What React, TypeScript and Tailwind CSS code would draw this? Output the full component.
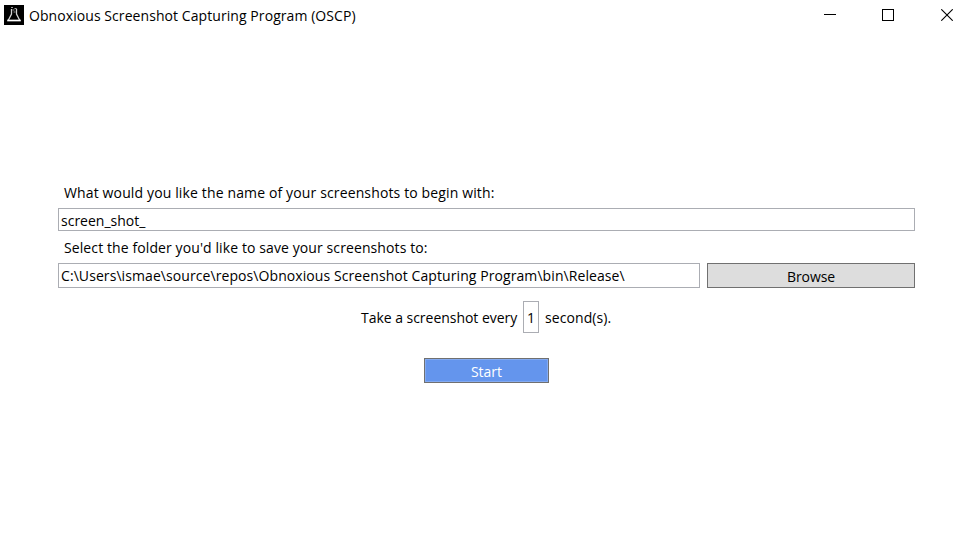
import React from "react";

function FlaskIcon() {
  return (
    <svg width="20" height="20" viewBox="0 0 20 20" className="shrink-0">
      <rect width="20" height="20" fill="#000" />
      <path d="M7.5 4v5L4.3 15.3M12.5 4v5l3.2 6.3" fill="none" stroke="#d2d2d2" strokeWidth="1.3" />
      <path d="M7 2.5h2M10.5 3.5h2.2M8.5 5h2M9.5 7h2" fill="none" stroke="#a0a0a0" strokeWidth="1.2" />
      <path d="M3.2 15.5h13.6" stroke="#fff" strokeWidth="1.7" />
    </svg>
  );
}

function TitleBar() {
  return (
    <header className="flex h-[30px] items-center pl-1">
      <FlaskIcon />
      <h1 className="ml-[5px] pt-[2px] tracking-[0.07px]">Obnoxious Screenshot Capturing Program (OSCP)</h1>
      <div className="mr-[22px] ml-auto flex items-center">
        <button aria-label="Minimize" className="mr-[46px] flex h-3 w-3">
          <svg width="12" height="12" shapeRendering="crispEdges"><path d="M0 5.5h12" stroke="#000" /></svg>
        </button>
        <button aria-label="Maximize" className="mr-[47px] flex h-3 w-3">
          <svg width="12" height="12" shapeRendering="crispEdges"><path d="M.5 .5h11v11h-11z" fill="none" stroke="#000" /></svg>
        </button>
        <button aria-label="Close" className="flex h-3 w-3">
          <svg width="12" height="12"><path d="M.3 .3l11.4 11.4M11.7 .3L.3 11.7" stroke="#000" strokeWidth="1.1" /></svg>
        </button>
      </div>
    </header>
  );
}

export default function App() {
  return (
    <div className="h-[544px] w-[975px] overflow-hidden bg-white font-['Open_Sans',sans-serif] text-[14px] leading-5 whitespace-nowrap text-black">
      <TitleBar />
      <main className="flex flex-col pt-[153px] pr-[60px] pl-[58px]">
        <p className="pl-[6px] tracking-[0.135px]">What would you like the name of your screenshots to begin with:</p>
        <div className="mt-[5px] flex h-[23px] items-center border border-[#abadb3] pt-[2px] pl-[2px]">screen_shot_</div>
        <p className="mt-[7px] pl-[6px] tracking-[0.1px]">Select the folder you'd like to save your screenshots to:</p>
        <div className="mt-[5px] flex h-[25px] gap-[7px]">
          <div className="flex w-[642px] items-center border border-[#abadb3] pl-[2px] tracking-[0.08px]">C:\Users\ismae\source\repos\Obnoxious Screenshot Capturing Program\bin\Release\</div>
          <button className="flex w-[208px] items-center justify-center border border-[#707070] bg-[#dddddd] pt-[2px] tracking-[-0.1px]">Browse</button>
        </div>
        <div className="mt-[13px] flex h-8 items-center pl-[303px]">
          <span className="w-[162px] pt-[2px] tracking-[-0.03px]">Take a screenshot every</span>
          <span className="flex h-8 w-4 items-center justify-center border border-[#abadb3] pt-[2px]">1</span>
          <span className="ml-[6px] pt-[2px] tracking-[0.08px]">second(s).</span>
        </div>
        <button className="mt-[25px] ml-[366px] flex h-[25px] w-[125px] items-center justify-center border border-[#707070] bg-[#6495ed] pt-[2px] text-white inset-ring inset-ring-[#83aaf1]">Start</button>
      </main>
    </div>
  );
}
